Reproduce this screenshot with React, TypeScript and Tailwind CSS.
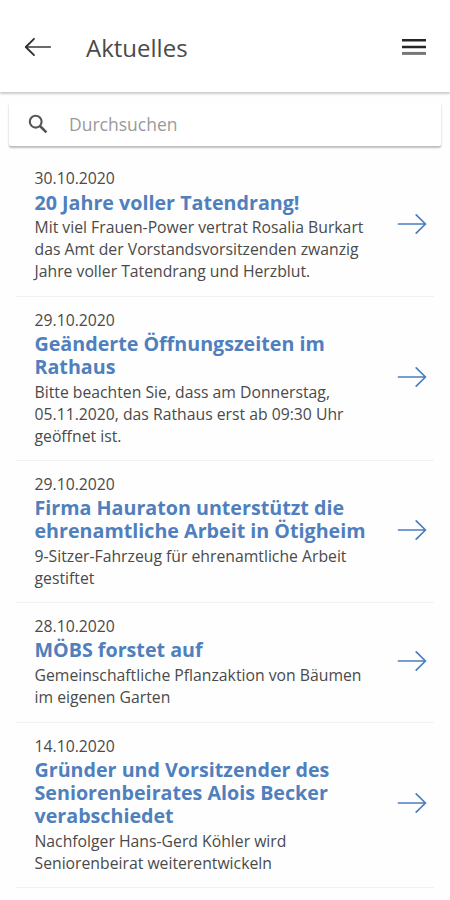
const news = [
  {
    date: "30.10.2020",
    title: ["20 Jahre voller Tatendrang!"],
    text: [
      "Mit viel Frauen-Power vertrat Rosalia Burkart",
      "das Amt der Vorstandsvorsitzenden zwanzig",
      "Jahre voller Tatendrang und Herzblut.",
    ],
  },
  {
    date: "29.10.2020",
    title: ["Geänderte Öffnungszeiten im", "Rathaus"],
    text: [
      "Bitte beachten Sie, dass am Donnerstag,",
      "05.11.2020, das Rathaus erst ab 09:30 Uhr",
      "geöffnet ist.",
    ],
  },
  {
    date: "29.10.2020",
    title: ["Firma Hauraton unterstützt die", "ehrenamtliche Arbeit in Ötigheim"],
    text: ["9-Sitzer-Fahrzeug für ehrenamtliche Arbeit", "gestiftet"],
  },
  {
    date: "28.10.2020",
    title: ["MÖBS forstet auf"],
    text: ["Gemeinschaftliche Pflanzaktion von Bäumen", "im eigenen Garten"],
  },
  {
    date: "14.10.2020",
    title: [
      "Gründer und Vorsitzender des",
      "Seniorenbeirates Alois Becker",
      "verabschiedet",
    ],
    text: ["Nachfolger Hans-Gerd Köhler wird", "Seniorenbeirat weiterentwickeln"],
  },
];

function ArrowLeft() {
  return (
    <svg
      width="28"
      height="20"
      viewBox="0 0 28 20"
      fill="none"
      strokeLinecap="round"
      strokeLinejoin="round"
    >
      <path d="M2 10H26.2" stroke="#6a6a6a" strokeWidth="1.8" />
      <path d="M10 1.8L1.8 10L10 18.2" stroke="#2e2e2e" strokeWidth="1.8" />
    </svg>
  );
}

function ArrowRight() {
  return (
    <svg
      className="mb-[2px]"
      width="30"
      height="22"
      viewBox="0 0 30 22"
      fill="none"
      stroke="#4a7dbd"
      strokeWidth="1.7"
      strokeLinecap="round"
      strokeLinejoin="round"
    >
      <path d="M1.5 11H28.5M19.2 1.8L28.5 11L19.2 20.2" />
    </svg>
  );
}

function MenuIcon() {
  return (
    <svg
      width="24"
      height="18"
      viewBox="0 0 24 18"
      strokeWidth="2.4"
      className="ml-auto"
    >
      <path d="M0 2.3H24M0 9H24" stroke="#262626" />
      <path d="M0 15.4H24" stroke="#777" strokeWidth="3" />
    </svg>
  );
}

function SearchIcon() {
  return (
    <svg
      width="20"
      height="20"
      viewBox="0 0 20 20"
      fill="none"
      stroke="#555"
      strokeWidth="2.1"
    >
      <circle cx="7.7" cy="7.7" r="5.9" />
      <path d="M12 12L18.4 18.4" strokeWidth="2.6" />
    </svg>
  );
}

export default function App() {
  return (
    <div className="h-[900px] w-[450px] overflow-hidden bg-[#fefefe] font-['Open_Sans',sans-serif] text-[#4a4a4a]">
      <header className="flex h-[92px] items-center bg-white px-6 pt-px shadow-[0_2px_2px_rgba(0,0,0,0.2)]">
        <ArrowLeft />
        <h1 className="mt-0.5 ml-[34px] text-[24px]">Aktuelles</h1>
        <MenuIcon />
      </header>

      <div className="mx-[9px] mt-[10px] flex h-[44px] items-center rounded-[2px] bg-white pl-[19px] shadow-[0_2px_2px_rgba(0,0,0,0.24),0_1px_2px_rgba(0,0,0,0.05)]">
        <SearchIcon />
        <span className="ml-[21px] text-[17.5px] text-[#9a9a9a]">
          Durchsuchen
        </span>
      </div>

      <main className="mx-4 mt-[9.4px]">
        {news.map((item) => (
          <article
            key={item.title[0]}
            className="flex items-center justify-between border-b border-[#f2f2f2] pt-3 pr-[7px] pb-[13.3px] pl-[18.5px]"
          >
            <div className="whitespace-nowrap">
              <p className="text-[15.75px] leading-[22px]">{item.date}</p>
              <h2 className="pt-[1.2px] pb-[2.8px] text-[19.68px] leading-[23px] font-bold text-[#4f80bd]">
                {item.title.map((line) => (
                  <span key={line} className="block">
                    {line}
                  </span>
                ))}
              </h2>
              <p className="text-[15.75px] leading-[22px]">
                {item.text.map((line) => (
                  <span key={line} className="block">
                    {line}
                  </span>
                ))}
              </p>
            </div>
            <ArrowRight />
          </article>
        ))}
      </main>
    </div>
  );
}
